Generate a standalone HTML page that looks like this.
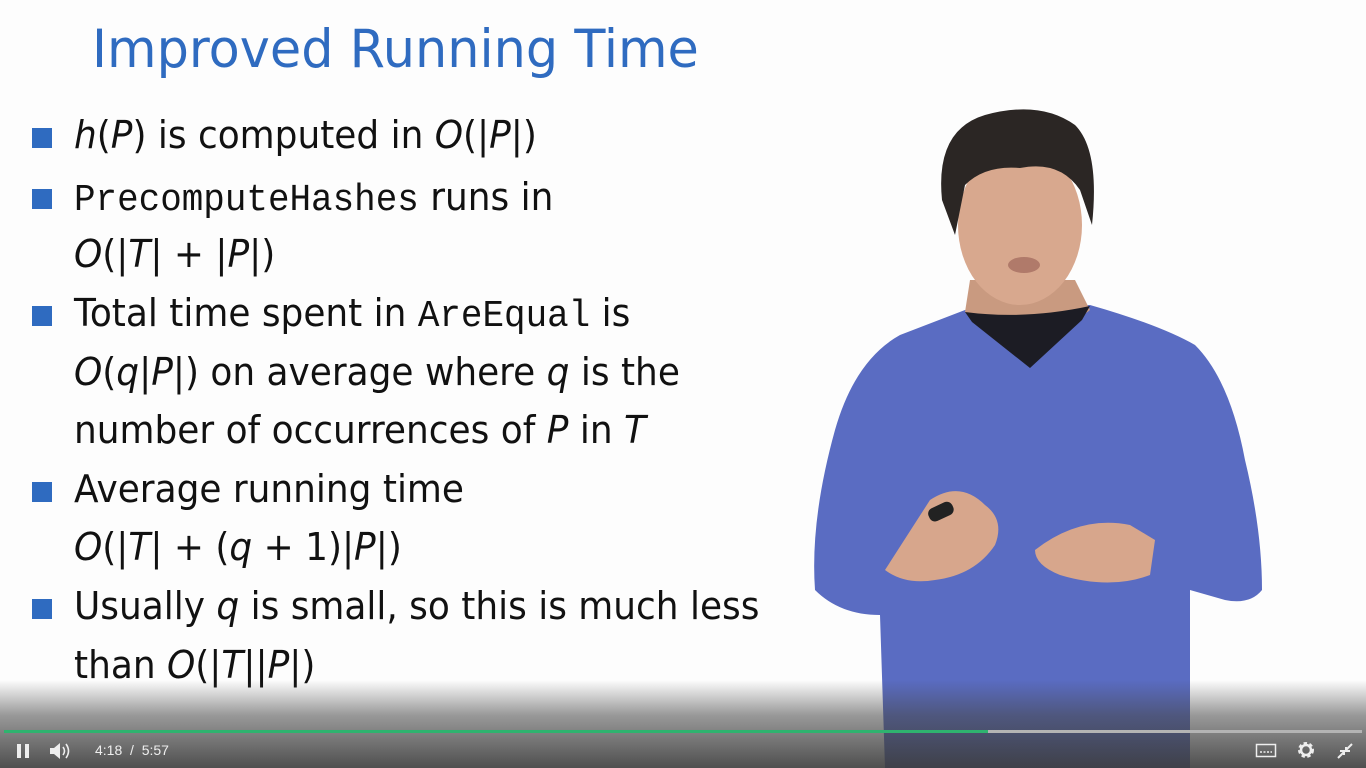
<!DOCTYPE html>
<html><head><meta charset="utf-8"><style>
html,body{margin:0;padding:0;width:1366px;height:768px;overflow:hidden;background:#fdfdfd;font-family:"DejaVu Sans","Liberation Sans",sans-serif}
.t{position:absolute;white-space:nowrap;color:#111}
.title{position:absolute;left:92px;top:19px;font-size:53px;color:#2f6bc0;font-weight:normal;font-family:"DejaVu Sans",sans-serif;transform:scaleX(.96);transform-origin:left}
.l{font-size:38px;transform:scaleX(.945);transform-origin:left}
.b{position:absolute;left:32px;width:20px;height:20px;background:#2f6bc0}
i{font-family:"DejaVu Sans",sans-serif;font-style:oblique}
.m{font-family:"Liberation Mono",monospace}
</style></head><body>
<div class="title">Improved Running Time</div>
<div class="b" style="top:128px"></div>
<div class="t l" style="left:74px;top:113px"><i>h</i>(<i>P</i>) is computed in <i>O</i>(|<i>P</i>|)</div>
<div class="b" style="top:189px"></div>
<div class="t l" style="left:74px;top:175px"><span class="m">PrecomputeHashes</span> runs in</div>
<div class="t l" style="left:74px;top:232px"><i>O</i>(|<i>T</i>| + |<i>P</i>|)</div>
<div class="b" style="top:306px"></div>
<div class="t l" style="left:74px;top:291px">Total time spent in <span class="m">AreEqual</span> is</div>
<div class="t l" style="left:74px;top:350px"><i>O</i>(<i>q</i>|<i>P</i>|) on average where <i>q</i> is the</div>
<div class="t l" style="left:74px;top:408px">number of occurrences of <i>P</i> in <i>T</i></div>
<div class="b" style="top:482px"></div>
<div class="t l" style="left:74px;top:467px">Average running time</div>
<div class="t l" style="left:74px;top:525px"><i>O</i>(|<i>T</i>| + (<i>q</i> + 1)|<i>P</i>|)</div>
<div class="b" style="top:599px"></div>
<div class="t l" style="left:74px;top:584px">Usually <i>q</i> is small, so this is much less</div>
<div class="t l" style="left:74px;top:643px">than <i>O</i>(|<i>T</i>||<i>P</i>|)</div>

<svg style="position:absolute;left:0;top:0" width="1366" height="768">
 <path d="M965 310 L1090 305 Q1160 325 1195 345 Q1230 380 1245 460 Q1262 530 1262 590 Q1250 605 1225 600 L1190 590 L1190 768 L885 768 L880 615 Q840 615 815 590 Q810 520 835 430 Q855 360 900 335 Z" fill="#5a6cc2"/>
 <path d="M970 280 L1075 280 L1090 310 L1025 360 L965 312 Z" fill="#c99a80"/>
 <path d="M965 312 Q1025 320 1090 306 L1082 320 L1030 368 L972 322 Z" fill="#1c1c24"/>
 <ellipse cx="1020" cy="225" rx="62" ry="80" fill="#d8a88e"/>
 <path d="M942 200 Q935 130 985 115 Q1040 100 1075 125 Q1100 150 1092 225 L1080 190 Q1060 160 1020 168 Q985 165 965 185 L955 235 Z" fill="#2b2624"/>
 <ellipse cx="1024" cy="265" rx="16" ry="8" fill="#b07a6a"/>
 <path d="M930 500 Q960 480 985 505 Q1005 520 995 545 Q975 575 935 580 Q905 585 885 570 Z" fill="#d7a68c"/>
 <path d="M1035 550 Q1080 515 1130 525 L1155 540 L1150 575 Q1110 590 1060 575 Q1035 565 1035 550 Z" fill="#d7a68c"/>
 <rect x="928" y="505" width="26" height="14" rx="6" fill="#222" transform="rotate(-25 940 512)"/>
</svg>

<div style="position:absolute;left:0;top:680px;width:1366px;height:88px;background:linear-gradient(rgba(80,80,80,0),rgba(70,70,70,.55) 40%,rgba(60,60,60,.9))"></div>
<div style="position:absolute;left:4px;top:730px;width:1358px;height:3px;background:#b4b4b4"></div>
<div style="position:absolute;left:4px;top:730px;width:984px;height:3px;background:#2fb36f"></div>
<div style="position:absolute;left:17px;top:744px;width:4px;height:14px;background:#eee"></div>
<div style="position:absolute;left:25px;top:744px;width:4px;height:14px;background:#eee"></div>
<svg style="position:absolute;left:48px;top:741px" width="24" height="20"><path d="M2 7h4l6-5v16l-6-5H2z" fill="#eee"/><path d="M15 6q3 4 0 8M18 3q5 7 0 14" stroke="#eee" stroke-width="1.6" fill="none"/></svg>
<div style="position:absolute;left:95px;top:742px;color:#eee;font-size:14px;font-family:'Liberation Sans',sans-serif">4:18 &nbsp;/ &nbsp;5:57</div>
<svg style="position:absolute;left:1255px;top:742px" width="22" height="18"><rect x="1.5" y="2.5" width="19" height="12" fill="none" stroke="#eee" stroke-width="1.5"/><path d="M5 10h12" stroke="#eee" stroke-width="1.5" stroke-dasharray="2 1.5"/></svg>
<svg style="position:absolute;left:1296px;top:740px" width="20" height="20"><circle cx="10" cy="10" r="6" fill="none" stroke="#eee" stroke-width="4" stroke-dasharray="3 2.2"/><circle cx="10" cy="10" r="5" fill="none" stroke="#eee" stroke-width="2.5"/></svg>
<svg style="position:absolute;left:1335px;top:741px" width="20" height="20"><path d="M3 17l6-6M5 10h4v4M17 3l-6 6M15 10h-4V6" stroke="#eee" stroke-width="2" fill="none"/></svg>
</body></html>
